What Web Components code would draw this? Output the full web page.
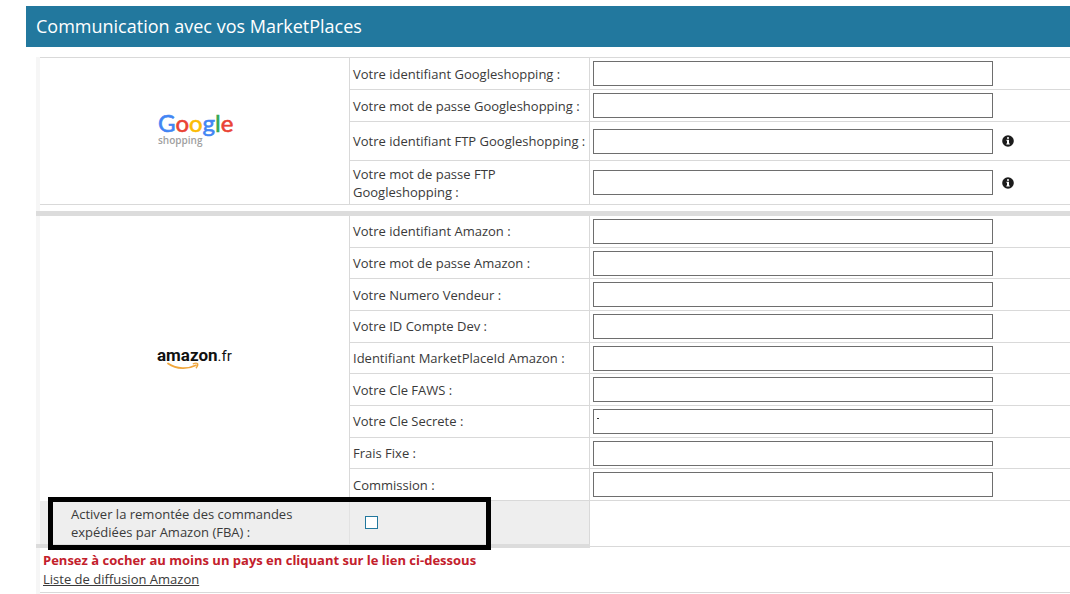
<!DOCTYPE html>
<html lang="fr">
<head>
<meta charset="utf-8">
<meta name="viewport" content="width=device-width, initial-scale=1">
<title>Communication avec vos MarketPlaces</title>
<style>
  body {
    margin: 6px 0 0 26px;
    background: #fff;
    color: #3a3a3a;
    font: 13px/18px "Open Sans", "Noto Sans", sans-serif;
    --line: #d9d9d9;
    --bar: #dcdcdc;
    --strip: #f6f6f6;
    --accent: #22789e;
  }
</style>
</head>
<body>

<market-panel heading="Communication avec vos MarketPlaces">
  <market-group class="google">
    <google-logo slot="logo"></google-logo>
    <market-field label="Votre identifiant Googleshopping :"></market-field>
    <market-field label="Votre mot de passe Googleshopping :"></market-field>
    <market-field label="Votre identifiant FTP Googleshopping :" info="Identifiant FTP" size="medium"></market-field>
    <market-field label="Votre mot de passe FTP Googleshopping :" info="Mot de passe FTP" size="large"></market-field>
  </market-group>
  <market-separator></market-separator>
  <market-group class="amazon">
    <amazon-logo slot="logo"></amazon-logo>
    <market-field label="Votre identifiant Amazon :"></market-field>
    <market-field label="Votre mot de passe Amazon :"></market-field>
    <market-field label="Votre Numero Vendeur :"></market-field>
    <market-field label="Votre ID Compte Dev :"></market-field>
    <market-field label="Identifiant MarketPlaceId Amazon :"></market-field>
    <market-field label="Votre Cle FAWS :"></market-field>
    <market-field label="Votre Cle Secrete :" mark></market-field>
    <market-field label="Frais Fixe :"></market-field>
    <market-field label="Commission :"></market-field>
  </market-group>
  <market-option label="Activer la remontée des commandes expédiées par Amazon (FBA) :"></market-option>
  <market-notice>
    Pensez à cocher au moins un pays en cliquant sur le lien ci-dessous
    <a slot="link" href="#diffusion">Liste de diffusion Amazon</a>
  </market-notice>
</market-panel>

<script>
class MarketPanel extends HTMLElement {
  connectedCallback() {
    this.attachShadow({ mode: "open" });
    this.shadowRoot.innerHTML = `
      <style>
        :host { display: block; }
        h1 {
          margin: 0;
          padding: 8px 10px;
          background: var(--accent);
          color: #fff;
          font-size: 18px;
          font-weight: 400;
          line-height: 25px;
        }
        .body {
          margin: 10px 0 0 10px;
          border-left: 4px solid var(--strip);
          padding-bottom: 8px;
        }
      </style>
      <h1></h1>
      <div class="body"><slot></slot></div>
    `;
    this.shadowRoot.querySelector("h1").textContent = this.getAttribute("heading");
  }
}

class MarketGroup extends HTMLElement {
  constructor() {
    super();
    this.attachShadow({ mode: "open" });
    this.shadowRoot.innerHTML = `
      <style>
        :host {
          display: grid;
          grid-template-columns: 309px minmax(0, 1fr);
        }
        :host(.google) {
          border-top: 1px solid var(--line);
          border-bottom: 1px solid var(--line);
        }
        :host(.amazon) .fields { min-height: 285px; }
        .logo {
          display: flex;
          align-items: center;
          justify-content: center;
        }
        .fields {
          display: flex;
          flex-direction: column;
        }
      </style>
      <div class="logo"><slot name="logo"></slot></div>
      <div class="fields"><slot></slot></div>
    `;
  }
}

class MarketField extends HTMLElement {
  connectedCallback() {
    this.attachShadow({ mode: "open" });
    this.shadowRoot.innerHTML = `
      <style>
        :host {
          display: grid;
          grid-template-columns: 240px minmax(0, 1fr);
          flex: 1 0 auto;
          box-sizing: border-box;
          min-height: 31px;
          border-bottom: 1px solid var(--line);
        }
        :host-context(.google) { min-height: 32px; }
        :host([size="medium"]) { min-height: 39px; }
        :host([size="large"]) {
          min-height: 43px;
          border-bottom: 0;
        }
        .cell {
          display: flex;
          align-items: center;
          box-sizing: border-box;
          border-left: 1px solid var(--line);
          padding-left: 3px;
        }
        input {
          box-sizing: border-box;
          width: 400px;
          height: 25px;
          margin: 0;
          padding: 2px 4px;
          border: 1px solid #6e6e6e;
          border-radius: 0;
          background: #fff;
          font: inherit;
        }
        :host([mark]) input {
          background: linear-gradient(#333, #333) 3px 8px / 2px 1px no-repeat #fff;
        }
        button {
          display: flex;
          margin: 0 0 0 9px;
          padding: 0;
          border: 0;
          background: none;
        }
      </style>
      <div class="cell"><label for="field"></label></div>
      <div class="cell"><input id="field" type="text"></div>
    `;
    this.shadowRoot.querySelector("label").textContent = this.getAttribute("label");

    if (this.hasAttribute("info")) {
      const button = document.createElement("button");
      button.type = "button";
      button.setAttribute("aria-label", this.getAttribute("info"));
      button.innerHTML = `
        <svg width="12" height="12" viewBox="0 0 12 12">
          <circle cx="6" cy="6" r="5.8" fill="#1c1c1c"/>
          <path d="M5 2.2h2v1.6H5zM4.4 4.8H7v3.8h.8v1H4.3v-1H5V5.8h-.6z" fill="#fff"/>
        </svg>
      `;
      this.shadowRoot.querySelector("input").after(button);
    }
  }
}

class MarketSeparator extends HTMLElement {
  constructor() {
    super();
    this.attachShadow({ mode: "open" });
    // the bar also covers the pale strip on the left of the table
    this.shadowRoot.innerHTML = `
      <style>
        :host {
          display: block;
          height: 5px;
          margin: 6px 0 0 -4px;
          background: var(--bar);
        }
      </style>
    `;
  }
}

class MarketOption extends HTMLElement {
  connectedCallback() {
    this.attachShadow({ mode: "open" });
    this.shadowRoot.innerHTML = `
      <style>
        :host {
          display: grid;
          grid-template-columns: 554px minmax(0, 1fr);
          align-items: start;
          position: relative;
          margin-left: -4px;
        }
        .row {
          display: grid;
          grid-template-columns: 309px minmax(0, 1fr);
          box-sizing: border-box;
          min-height: 47px;
          padding-left: 4px;
          border-bottom: 4px solid var(--bar);
          background: linear-gradient(to right, var(--strip) 4px, #eee 4px);
        }
        .label {
          display: flex;
          align-items: center;
          padding: 0 40px 0 31px;
        }
        .value {
          display: flex;
          align-items: center;
          border-left: 1px solid #e2e2e2;
          border-right: 1px solid var(--line);
          padding-left: 15px;
        }
        .rest {
          height: 45px;
          border-bottom: 1px solid var(--line);
        }
        .frame {
          position: absolute;
          left: 12px;
          top: -4px;
          box-sizing: border-box;
          width: 443px;
          height: 53px;
          border: 5px solid #000;
          pointer-events: none;
        }
        input {
          appearance: none;
          box-sizing: border-box;
          width: 13px;
          height: 13px;
          margin: 0;
          border: 1px solid var(--accent);
          border-radius: 0;
          background: #fff;
        }
        input:checked { background: var(--accent); }
      </style>
      <div class="row">
        <div class="label"><label for="option"></label></div>
        <div class="value"><input id="option" type="checkbox"></div>
      </div>
      <div class="rest"></div>
      <div class="frame"></div>
    `;
    this.shadowRoot.querySelector("label").textContent = this.getAttribute("label");
  }
}

class MarketNotice extends HTMLElement {
  constructor() {
    super();
    this.attachShadow({ mode: "open" });
    this.shadowRoot.innerHTML = `
      <style>
        :host {
          display: block;
          padding: 3px;
          border-bottom: 1px solid var(--line);
        }
        p {
          margin: 0;
          line-height: 19px;
        }
        .warning {
          color: #c3202b;
          font-weight: 700;
        }
        ::slotted(a) { color: #3a3a3a; }
      </style>
      <p class="warning"><slot></slot></p>
      <p><slot name="link"></slot></p>
    `;
  }
}

class GoogleLogo extends HTMLElement {
  constructor() {
    super();
    this.attachShadow({ mode: "open" });
    this.shadowRoot.innerHTML = `
      <style>
        :host { display: block; }
        svg { display: block; overflow: visible; }
        .name { font: 400 24px Lato, sans-serif; stroke-width: 0.6px; }
        .sub { font: 600 10px "Open Sans", sans-serif; }
        .blue { fill: #4285f4; stroke: #4285f4; }
        .red { fill: #ea4335; stroke: #ea4335; }
        .yellow { fill: #fbbc05; stroke: #fbbc05; }
        .green { fill: #34a853; stroke: #34a853; }
      </style>
      <svg width="74" height="38" viewBox="0 0 74 38" role="img" aria-label="Google shopping">
        <text class="name" x="0" y="20"><tspan class="blue">G</tspan><tspan class="red">o</tspan><tspan class="yellow">o</tspan><tspan class="blue">g</tspan><tspan class="green">l</tspan><tspan class="red">e</tspan></text>
        <text class="sub" x="0" y="32" fill="#a0a0a0">shopping</text>
      </svg>
    `;
  }
}

class AmazonLogo extends HTMLElement {
  constructor() {
    super();
    this.attachShadow({ mode: "open" });
    this.shadowRoot.innerHTML = `
      <style>
        :host { display: block; }
        svg { display: block; overflow: visible; }
        text { font: 700 17px Roboto, sans-serif; }
        .tld { font-weight: 400; font-size: 15px; }
      </style>
      <svg width="76" height="26" viewBox="0 0 76 26" role="img" aria-label="amazon.fr">
        <text x="0" y="15" fill="#111">amazon<tspan class="tld">.fr</tspan></text>
        <path d="M11 17.5C20 23.6 31 23.2 39 19.2" fill="none" stroke="#f0a63c" stroke-width="1.8" stroke-linecap="round"/>
        <path d="M35.8 17.8c2-.8 4.2-.8 4.8-.2.4.9-.2 3-1.6 4.6" fill="none" stroke="#f0a63c" stroke-width="1.3"/>
      </svg>
    `;
  }
}

customElements.define("market-panel", MarketPanel);
customElements.define("market-group", MarketGroup);
customElements.define("market-field", MarketField);
customElements.define("market-separator", MarketSeparator);
customElements.define("market-option", MarketOption);
customElements.define("market-notice", MarketNotice);
customElements.define("google-logo", GoogleLogo);
customElements.define("amazon-logo", AmazonLogo);
</script>
</body>
</html>
